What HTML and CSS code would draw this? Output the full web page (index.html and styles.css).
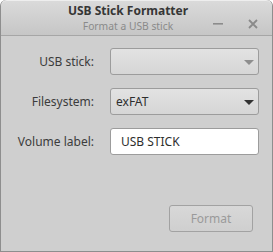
FILE: index.html
```html
<!DOCTYPE html>
<html>
<head>
<meta charset="utf-8">
<link rel="stylesheet" href="styles.css">
</head>
<body>
<div class="window">
  <div class="header">
    <div class="titles">
      <div class="title">USB Stick Formatter</div>
      <div class="subtitle">Format a USB stick</div>
    </div>
    <div class="ctl min"><svg width="12" height="12" viewBox="0 0 12 12"><rect x="1" y="5" width="10" height="1.6" fill="#8c8c8c"/></svg></div>
    <div class="ctl close"><svg width="12" height="12" viewBox="0 0 12 12"><path d="M2 2 L10 10 M10 2 L2 10" stroke="#8a8a8a" stroke-width="1.8"/></svg></div>
  </div>
  <div class="body">
    <div class="form">
      <div class="label">USB stick:</div>
      <div class="combo disabled"><span></span><i class="arrow"></i></div>
      <div class="label">Filesystem:</div>
      <div class="combo"><span>exFAT</span><i class="arrow"></i></div>
      <div class="label">Volume label:</div>
      <div class="entry">USB STICK</div>
    </div>
    <div class="actions">
      <div class="button">Format</div>
    </div>
  </div>
</div>
</body>
</html>
```
FILE: styles.css
```css
html, body { margin: 0; padding: 0; }
body { width: 273px; height: 252px; background: #fff; font-family: "Noto Sans", sans-serif; }
.window {
  width: 273px; height: 252px; box-sizing: border-box;
  border: 1px solid #8e8e8e; border-top: none;
  border-radius: 6px 6px 0 0;
  background: #cfcfcf;
  display: flex; flex-direction: column;
  overflow: hidden;
}
.header {
  height: 36px; box-sizing: border-box;
  border-bottom: 1px solid #a6a6a6;
  background: linear-gradient(#dadada, #c6c6c6);
  border-top: 1px solid #eeeeee;
  border-radius: 6px 6px 0 0;
  position: relative;
  padding-top: 2px;
}
.titles { text-align: center; padding-right: 17px; white-space: nowrap; }
.title { font-weight: bold; font-size: 12px; line-height: 16px; color: #363636; }
.subtitle { font-size: 10.3px; line-height: 14px; color: #8a8a8a; }
.ctl { position: absolute; top: 12px; width: 12px; height: 12px; }
.min { left: 211px; }
.close { left: 246px; }
.body { flex: 1; display: flex; flex-direction: column; padding: 12px 13px 19px 12px; }
.form {
  display: grid; grid-template-columns: 81px 149px; column-gap: 16px; row-gap: 13px;
  align-items: center;
}
.label { text-align: right; font-size: 12px; color: #3c3c3c; white-space: nowrap; }
.combo {
  height: 27px; box-sizing: border-box;
  border: 1px solid #9c9c9c; border-radius: 3px;
  background: linear-gradient(#e2e2e2, #d6d6d6);
  display: flex; align-items: center; justify-content: space-between;
  padding: 0 4px 0 5px;
  font-size: 12px; color: #2e2e2e;
}
.arrow {
  width: 0; height: 0; margin-top: 1px;
  border-left: 5px solid transparent; border-right: 5px solid transparent;
  border-top: 5px solid #333;
}
.combo.disabled .arrow { border-top-color: #8e8e8e; }
.entry {
  height: 27px; box-sizing: border-box;
  border: 1px solid #9c9c9c; border-radius: 3px;
  background: #fff;
  display: flex; align-items: center; padding: 0 10px;
  font-size: 12px; color: #2e2e2e;
}
.actions { flex: 1; display: flex; justify-content: flex-end; align-items: flex-end; }
.button {
  width: 84px; height: 27px; box-sizing: border-box;
  border: 1px solid #a2a2a2; border-radius: 3px;
  background: linear-gradient(#d8d8d8, #cfcfcf);
  display: flex; align-items: center; justify-content: center;
  font-size: 12px; color: #9a9a9a;
  margin-right: 6px;
}
```
